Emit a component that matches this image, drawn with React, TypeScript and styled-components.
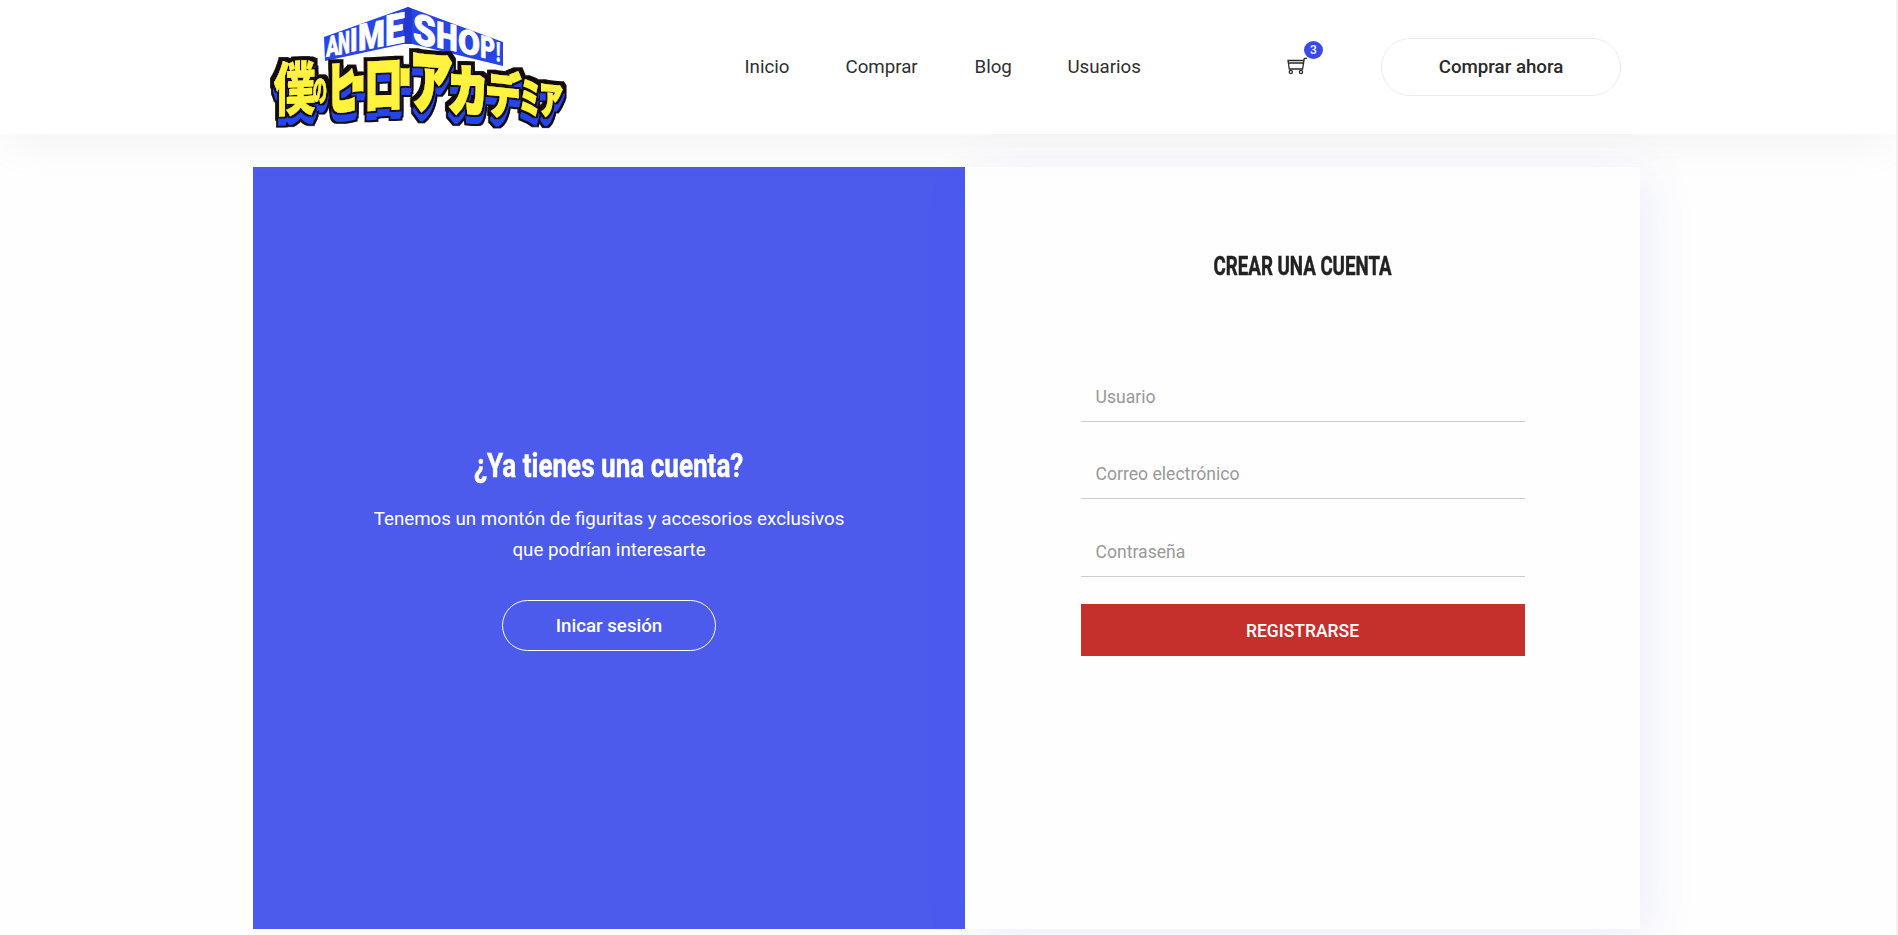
import React from "react";
import styled, { createGlobalStyle } from "styled-components";

const GlobalStyle = createGlobalStyle`
  * { box-sizing: border-box; }
  body {
    margin: 0;
    background: #fefefe;
    color: #2a2a2a;
    font-family: Roboto, "Liberation Sans", sans-serif;
    overflow: hidden;
  }
`;

const Page = styled.div`
  height: 935px;
  overflow: hidden;
  border-right: 2px solid #f1f1f1;
`;

const Header = styled.header`
  position: relative;
  z-index: 2;
  display: flex;
  align-items: center;
  height: 134px;
  padding-left: 255px;
  background: #fff;
  box-shadow: 0 18px 36px -10px rgba(153, 153, 153, 0.12);
`;

const LogoSvg = styled.svg`
  display: block;
  flex: none;
`;

const LogoGlyph = styled.text`
  font-family: "Noto Sans CJK JP", sans-serif;
  font-weight: 900;
  font-size: 100px;
  fill: #fff33d;
  stroke: #fff33d;
`;

const LogoLetter = styled.text`
  font-family: Roboto, sans-serif;
  font-weight: 900;
  font-size: 100px;
  fill: #fff;
  stroke: #fff;
  stroke-width: 2;
`;

const Nav = styled.nav`
  display: flex;
  gap: 56px;
  margin-left: 159.5px;
`;

const NavLink = styled.a<{ $width: number }>`
  width: ${(p) => p.$width}px;
  font-size: 18.7px;
  line-height: 28px;
  white-space: nowrap;
  color: #2f2f2f;
`;

const Cart = styled.div`
  position: relative;
  width: 20px;
  height: 18px;
  margin: -3px 0 0 144.5px;
`;

const CartBadge = styled.span`
  position: absolute;
  left: 17px;
  top: -16px;
  width: 19px;
  height: 18px;
  border-radius: 50%;
  background: #3a49ea;
  color: #fff;
  font-size: 12px;
  font-weight: 500;
  line-height: 18px;
  text-align: center;
`;

const PillButton = styled.button<{ $light?: boolean }>`
  width: ${(p) => (p.$light ? 214 : 240)}px;
  height: ${(p) => (p.$light ? 51 : 58)}px;
  padding: 0;
  border: 1px solid ${(p) => (p.$light ? "#fff" : "#ececec")};
  border-radius: 30px;
  background: transparent;
  color: ${(p) => (p.$light ? "#fff" : "#2a2a2a")};
  font: 500 18.7px Roboto, sans-serif;
`;

const BuyNow = styled(PillButton)`
  margin-left: 74px;
  padding-bottom: 1px;
`;

const Main = styled.main`
  display: flex;
  height: 762px;
  margin: 33px 0 0 253px;
`;

const Promo = styled.section`
  display: flex;
  flex-direction: column;
  align-items: center;
  width: 712px;
  padding-top: 273px;
  background: #4c5bec;
  color: #fff;
`;

const CondensedTitle = styled.h2<{ $size: number; $squeeze: number }>`
  margin: 0;
  font-size: ${(p) => p.$size}px;
  font-weight: 700;
  line-height: 50px;
  white-space: nowrap;
  -webkit-text-stroke: 0.5px currentColor;
  transform: scaleX(${(p) => p.$squeeze});
`;

const PromoText = styled.p`
  margin: 14px 0 0;
  font-size: 18.73px;
  line-height: 31px;
  text-align: center;
`;

const LoginButton = styled(PillButton)`
  margin-top: 34px;
`;

const FormPanel = styled.section`
  display: flex;
  flex-direction: column;
  align-items: center;
  width: 675px;
  padding-top: 74px;
  background: #fefefe;
  color: #222;
  box-shadow: 8px 8px 46px rgba(70, 80, 250, 0.1);
`;

const Form = styled.form`
  display: flex;
  flex-direction: column;
  width: 444px;
  margin-top: 81px;
`;

const Field = styled.input`
  height: 50px;
  margin-bottom: 27px;
  padding: 0 15px;
  border: 0;
  border-bottom: 1px solid #ccc;
  background: transparent;
  font: 400 17.6px Roboto, sans-serif;
  outline: none;
  &:nth-child(2) {
    margin-bottom: 28px;
  }
  &::placeholder {
    color: #999;
    opacity: 1;
  }
`;

const Submit = styled.button`
  height: 52px;
  padding: 1px 0 0;
  border: 0;
  background: #c5302c;
  color: #fff;
  font: 500 17.5px Roboto, sans-serif;
`;

type Glyph = { ch: string; x: number; y: number; w: number; h: number; skew: number; bold: number };

const glyphs: Glyph[] = [
  { ch: "僕", x: 277, y: 65, w: 35, h: 49, skew: -3, bold: 0.3 },
  { ch: "の", x: 314, y: 78, w: 12, h: 26, skew: -4, bold: 1 },
  { ch: "ヒ", x: 330, y: 66, w: 25, h: 47, skew: -5, bold: 6 },
  { ch: "ー", x: 353, y: 58, w: 10, h: 54, skew: -4, bold: 6 },
  { ch: "ロ", x: 367, y: 58, w: 33, h: 54, skew: -3, bold: 3 },
  { ch: "ー", x: 401, y: 50, w: 8, h: 56, skew: 0, bold: 8 },
  { ch: "ア", x: 413, y: 52, w: 36, h: 57, skew: 5, bold: 4 },
  { ch: "カ", x: 451, y: 67, w: 34, h: 46, skew: 3, bold: 5 },
  { ch: "デ", x: 488, y: 73, w: 30, h: 41, skew: 6, bold: 3 },
  { ch: "ミ", x: 521, y: 80, w: 18, h: 34, skew: 5, bold: 4 },
  { ch: "ア", x: 541, y: 83, w: 20, h: 32, skew: 6, bold: 4 },
];

type Letter = { ch: string; x: number; base: number; w: number; h: number; adv: number; slope: number };

const letters: Letter[] = [
  { ch: "A", x: 326, base: 57, w: 13, h: 20, adv: 69, slope: -0.2 },
  { ch: "N", x: 338, base: 55, w: 12, h: 22, adv: 71, slope: -0.2 },
  { ch: "I", x: 350, base: 52, w: 8, h: 23, adv: 32, slope: -0.2 },
  { ch: "M", x: 358, base: 51, w: 27, h: 26, adv: 88, slope: -0.2 },
  { ch: "E", x: 385, base: 46, w: 20, h: 30, adv: 57, slope: -0.2 },
  { ch: "S", x: 413, base: 43, w: 23, h: 30, adv: 63, slope: 0.22 },
  { ch: "H", x: 436, base: 47, w: 22, h: 26, adv: 71, slope: 0.22 },
  { ch: "O", x: 458, base: 52, w: 22, h: 24, adv: 69, slope: 0.22 },
  { ch: "P", x: 480, base: 57, w: 15, h: 22, adv: 65, slope: 0.22 },
  { ch: "!", x: 496, base: 61, w: 5, h: 19, adv: 32, slope: 0.22 },
];

function Logo() {
  return (
    <LogoSvg width="330" height="134" viewBox="255 0 330 134">
      <defs>
        <filter id="block" filterUnits="userSpaceOnUse" x="255" y="30" width="330" height="104">
          <feMorphology in="SourceAlpha" operator="dilate" radius="2" result="rim" />
          <feMorphology in="SourceAlpha" operator="dilate" radius="1" result="thick" />
          <feOffset in="thick" dy="8" result="low" />
          <feOffset in="thick" dx="1" dy="5" result="mid" />
          <feMerge result="depth">
            <feMergeNode in="mid" />
            <feMergeNode in="low" />
          </feMerge>
          <feMerge result="all">
            <feMergeNode in="rim" />
            <feMergeNode in="depth" />
          </feMerge>
          <feMorphology in="all" operator="dilate" radius="2" result="outer" />
          <feFlood floodColor="#120b10" result="ink" />
          <feComposite in="ink" in2="outer" operator="in" result="outerInk" />
          <feComposite in="ink" in2="rim" operator="in" result="rimInk" />
          <feFlood floodColor="#2745e8" result="blue" />
          <feComposite in="blue" in2="depth" operator="in" result="depthBlue" />
          <feMerge>
            <feMergeNode in="outerInk" />
            <feMergeNode in="depthBlue" />
            <feMergeNode in="rimInk" />
            <feMergeNode in="SourceGraphic" />
          </feMerge>
        </filter>
      </defs>
      <path d="M324 37 408 7 503 42V66L408 43 325 61Z" fill="#2745e8" />
      <path d="M404 9 408 7 412 9V44H404Z" fill="#2038d0" />
      {letters.map((l) => (
        <LogoLetter
          key={l.ch}
          transform={`matrix(${l.w / l.adv} ${(l.slope * l.w) / l.adv} 0 ${l.h / 71} ${l.x} ${l.base})`}
        >
          {l.ch}
        </LogoLetter>
      ))}
      <g filter="url(#block)">
        {glyphs.map((g, i) => (
          <LogoGlyph
            key={i}
            x={-8}
            y={79}
            strokeWidth={g.bold}
            transform={`translate(${g.x} ${g.y}) skewY(${g.skew}) scale(${g.w / 84} ${g.h / 84})`}
          >
            {g.ch}
          </LogoGlyph>
        ))}
      </g>
    </LogoSvg>
  );
}

function CartIcon() {
  return (
    <svg width="20" height="18" viewBox="0 0 20 18" fill="none" stroke="#2a2a2a" strokeWidth="1.3">
      <path d="M20 1.3H17.3L15.6 12H2.3L1 3.5H16.8M1.4 6H16.2" />
      <circle cx="3.8" cy="15" r="1.6" />
      <circle cx="14" cy="15" r="1.6" />
    </svg>
  );
}

export default function App() {
  return (
    <Page>
      <GlobalStyle />
      <Header>
        <Logo />
        <Nav>
          <NavLink $width={45}>Inicio</NavLink>
          <NavLink $width={73}>Comprar</NavLink>
          <NavLink $width={37}>Blog</NavLink>
          <NavLink $width={75}>Usuarios</NavLink>
        </Nav>
        <Cart>
          <CartIcon />
          <CartBadge>3</CartBadge>
        </Cart>
        <BuyNow>Comprar ahora</BuyNow>
      </Header>
      <Main>
        <Promo>
          <CondensedTitle $size={34} $squeeze={0.767}>¿Ya tienes una cuenta?</CondensedTitle>
          <PromoText>
            Tenemos un montón de figuritas y accesorios exclusivos
            <br />
            que podrían interesarte
          </PromoText>
          <LoginButton $light>Inicar sesión</LoginButton>
        </Promo>
        <FormPanel>
          <CondensedTitle $size={26.6} $squeeze={0.703}>CREAR UNA CUENTA</CondensedTitle>
          <Form>
            <Field placeholder="Usuario" />
            <Field placeholder="Correo electrónico" />
            <Field placeholder="Contraseña" type="password" />
            <Submit type="button">REGISTRARSE</Submit>
          </Form>
        </FormPanel>
      </Main>
    </Page>
  );
}
